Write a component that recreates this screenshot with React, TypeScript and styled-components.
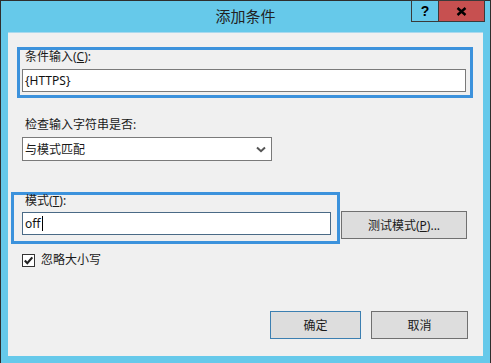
import styled, { createGlobalStyle } from 'styled-components';

const GlobalStyle = createGlobalStyle`
  body {
    margin: 0;
    background: #ffffff;
  }
  * {
    box-sizing: border-box;
  }
`;

const FONT = `"Noto Sans", "Noto Sans CJK SC", sans-serif`;

const Dialog = () => {
  return (
    <St.Window>
      <St.TitleBar>
        添加条件
        <St.CaptionButtons>
          <St.CaptionButton $width={28}>?</St.CaptionButton>
          <St.CaptionButton $width={47} $close>
            <svg width="11" height="9" viewBox="0 0 11 9">
              <path d="M1.5 1 L9.5 8 M9.5 1 L1.5 8" stroke="#000" strokeWidth="2.4" />
            </svg>
          </St.CaptionButton>
        </St.CaptionButtons>
      </St.TitleBar>

      <St.Client>
        <St.HighlightTop>
          <St.Label $lineHeight={14}>
            条件输入(<u>C</u>):
          </St.Label>
          <St.TextBox>{'{HTTPS}'}</St.TextBox>
        </St.HighlightTop>

        <St.PlainLabel>检查输入字符串是否:</St.PlainLabel>
        <St.Select>
          <span>与模式匹配</span>
          <svg width="10" height="7" viewBox="0 0 10 7">
            <path d="M1 1.5 L5 5.2 L9 1.5" stroke="#555" strokeWidth="2" fill="none" />
          </svg>
        </St.Select>

        <St.PatternRow>
          <St.HighlightPattern>
            <St.Label $lineHeight={12}>
              模式(<u>T</u>):
            </St.Label>
            <St.TextBox $focused>
              off
              <St.Caret />
            </St.TextBox>
          </St.HighlightPattern>
          <St.TestButton>
            测试模式(<u>P</u>)...
          </St.TestButton>
        </St.PatternRow>

        <St.CheckRow>
          <St.CheckBox>
            <svg width="11" height="11" viewBox="0 0 11 11">
              <path d="M1.8 5.6 L4.3 8.2 L9.3 2.4" stroke="#222" strokeWidth="2.2" fill="none" />
            </svg>
          </St.CheckBox>
          <span>忽略大小写</span>
        </St.CheckRow>

        <St.ButtonRow>
          <St.DialogButton $width={91} $default>
            确定
          </St.DialogButton>
          <St.DialogButton $width={97}>取消</St.DialogButton>
        </St.ButtonRow>
      </St.Client>
    </St.Window>
  );
};

export default function App() {
  return (
    <>
      <GlobalStyle />
      <Dialog />
    </>
  );
}

const St = {
  Window: styled.div`
    width: 491px;
    height: 363px;
    display: flex;
    flex-direction: column;
    background: #66c9ea;
    border: 1px solid #2e2e2e;
    border-bottom: none;
    font-family: ${FONT};
    color: #1a1a1a;
  `,
  TitleBar: styled.div`
    position: relative;
    height: 31px;
    flex-shrink: 0;
    text-align: center;
    font-size: 15px;
    line-height: 31px;
    color: #222;
  `,
  CaptionButtons: styled.div`
    position: absolute;
    top: -1px;
    right: 5px;
    display: flex;
  `,
  CaptionButton: styled.div<{ $width: number; $close?: boolean }>`
    width: ${({ $width }) => $width}px;
    height: 22px;
    display: flex;
    align-items: center;
    justify-content: center;
    border: 1px solid #3a3a3a;
    margin-left: -1px;
    background: ${({ $close }) => ($close ? '#c75050' : 'transparent')};
    font-family: "Liberation Sans", sans-serif;
    font-weight: bold;
    font-size: 14px;
    color: #000;
  `,
  Client: styled.div`
    flex: 1;
    margin: 0 7px 7px 7px;
    padding: 0 17px 17px 14px;
    display: flex;
    flex-direction: column;
    background: #f0f0f0;
    border-top: 1px solid #a9d9ee;
    font-size: 12px;
  `,
  HighlightTop: styled.div`
    margin: 14px -7px 0 -5px;
    padding: 0 4px 3px 2px;
    border: 3px solid #3c92dc;
  `,
  HighlightPattern: styled.div`
    flex-shrink: 0;
    width: 329px;
    margin-left: -11px;
    padding: 0 6px 6px 8px;
    border: 3px solid #3c92dc;
  `,
  Label: styled.div<{ $lineHeight: number }>`
    padding-left: 3px;
    line-height: ${({ $lineHeight }) => $lineHeight}px;
    u {
      text-underline-offset: 1px;
    }
  `,
  PlainLabel: styled.div`
    margin-top: 20px;
    padding-left: 3px;
    line-height: 14px;
  `,
  TextBox: styled.div<{ $focused?: boolean }>`
    margin-top: 5px;
    height: 23px;
    display: flex;
    align-items: center;
    padding-left: 2px;
    background: #ffffff;
    border: 1px solid ${({ $focused }) => ($focused ? '#4a6a86' : '#7a7a7a')};
    font-size: 12px;
    color: #111;
  `,
  Caret: styled.span`
    display: inline-block;
    width: 1px;
    height: 15px;
    margin-left: 1px;
    background: #000;
  `,
  Select: styled.div`
    margin-top: 5px;
    width: 250px;
    height: 24px;
    display: flex;
    align-items: center;
    justify-content: space-between;
    padding: 0 5px 0 2px;
    background: #ffffff;
    border: 1px solid #7a7a7a;
  `,
  PatternRow: styled.div`
    margin-top: 31px;
    display: flex;
    align-items: flex-start;
  `,
  TestButton: styled.div`
    flex-shrink: 0;
    width: 126px;
    height: 28px;
    margin: 19px 0 0 1px;
    display: flex;
    align-items: center;
    justify-content: center;
    background: #dddddd;
    border: 1px solid #707070;
  `,
  CheckRow: styled.div`
    margin-top: 9px;
    display: flex;
    align-items: center;
    gap: 6px;
    line-height: 14px;
  `,
  CheckBox: styled.div`
    width: 13px;
    height: 13px;
    display: flex;
    align-items: center;
    justify-content: center;
    background: #ffffff;
    border: 1px solid #333;
  `,
  ButtonRow: styled.div`
    margin-top: auto;
    margin-right: -2px;
    display: flex;
    justify-content: flex-end;
    gap: 10px;
  `,
  DialogButton: styled.div<{ $width: number; $default?: boolean }>`
    width: ${({ $width }) => $width}px;
    height: 28px;
    display: flex;
    align-items: center;
    justify-content: center;
    background: #dddddd;
    border: 1px solid ${({ $default }) => ($default ? '#3c7fb1' : '#707070')};
  `,
};
